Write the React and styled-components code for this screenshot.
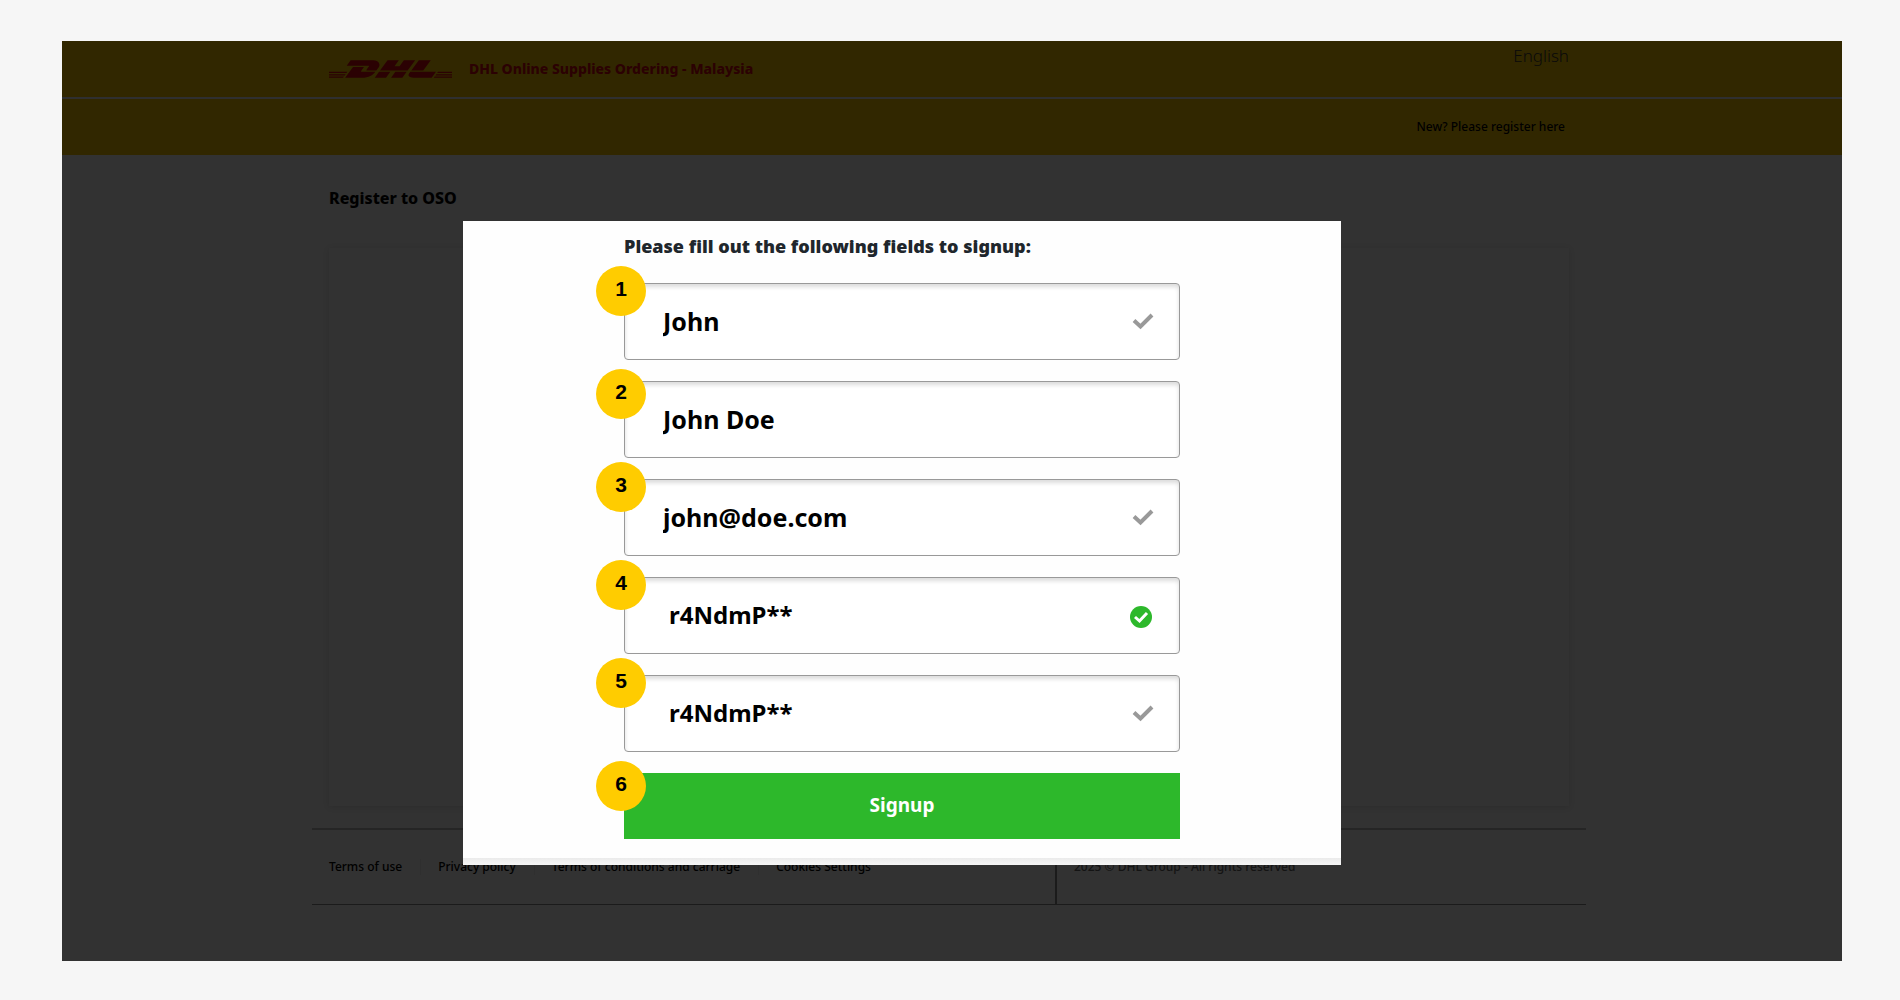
import React from "react"
import styled, { createGlobalStyle } from "styled-components"
import { SiDhl } from "react-icons/si"

const GlobalStyle = createGlobalStyle`
  * {
    box-sizing: border-box;
  }

  body {
    margin: 0;
    background: #f6f6f6;
    font-family: "Noto Sans", "Open Sans", sans-serif;
  }
`

const Page = styled.div`
  padding: 41px 58px 39px 62px;
`

const Stage = styled.div`
  position: relative;
  display: flex;
  flex-direction: column;
  min-height: calc(100vh - 80px);
  background: #f7f7f7;
`

const Bar = styled.div`
  height: 56px;
  padding-right: 6px;
  background: #f5c400;
`

const Header = styled.header`
  display: grid;
  gap: 2px;
  background: #e8ecf0;
`

const Container = styled.div`
  display: flex;
  justify-content: ${({ $end }) => ($end ? "flex-end" : "space-between")};
  align-items: ${({ $top }) => ($top ? "flex-start" : "center")};
  max-width: 1274px;
  height: 100%;
  margin: 0 auto;
  padding: 0 17px;
`

const Brand = styled.a`
  display: flex;
  align-items: center;
  gap: 17px;
  padding-top: 18px;
  color: #d40511;
  font-size: 14px;
  line-height: 20px;
  font-weight: 800;
  text-decoration: none;

  svg {
    width: 123px;
    height: 18px;
  }
`

const Language = styled.a`
  padding-top: 3px;
  color: #333;
  font-size: 17px;
  line-height: 24px;
  font-weight: 300;
  text-decoration: none;
`

const Register = styled.a`
  padding: 0 4px 2px 0;
  color: #000;
  font-size: 12px;
  font-weight: 500;
  text-decoration: none;
`

const Main = styled.main`
  flex: 1;
  width: 100%;
  max-width: 1280px;
  display: flex;
  flex-direction: column;
  margin: 0 auto;
  padding: 31px 23px 22px 17px;

  h1 {
    margin: 0 0 38px;
    font-size: 16px;
    line-height: 24px;
    font-weight: 800;
  }
`

const Card = styled.div`
  flex: 1;
  background: #fafafa;
  box-shadow: 0 1px 6px rgba(0, 0, 0, 0.12);
`

const FooterWrap = styled.div`
  padding: 0 6px 56px 0;
`

const Footer = styled.footer`
  display: flex;
  max-width: 1274px;
  height: 77px;
  margin: 0 auto;
  border-top: 2px solid #bbb;
  border-bottom: 1px solid #888;
  font-size: 12px;
  line-height: 16px;
  font-weight: 500;
`

const FooterLinks = styled.nav`
  flex: 0 0 745px;
  display: flex;
  align-items: flex-start;
  padding: 29px 0 0 17px;
  border-right: 2px solid #888;

  a {
    color: #000;
    text-decoration: none;
    white-space: nowrap;
  }

  a + a {
    margin-left: 18px;
    padding-left: 17px;
    border-left: 1px solid #e8e8e8;
  }
`

const Copyright = styled.p`
  margin: 0;
  padding: 29px 0 0 17px;
  color: #666;
`

const Overlay = styled.div`
  position: absolute;
  inset: 0;
  display: flex;
  justify-content: center;
  align-items: flex-start;
  padding: 180px 100px 0 0;
  background: rgba(0, 0, 0, 0.8);
`

const Modal = styled.form`
  width: 878px;
  background: #fefefe;
  padding: 11px 161px 0;

  h2 {
    margin: 0 0 23px;
    color: #20262c;
    font-size: 18px;
    line-height: 28px;
    font-weight: 900;
    white-space: nowrap;
  }
`

const Fields = styled.div`
  display: grid;
  gap: 21px;
`

const Field = styled.div`
  position: relative;

  svg {
    position: absolute;
    top: 27px;
    right: 26px;
  }
`

const Badge = styled.label`
  position: absolute;
  top: ${({ $low }) => ($low ? "-12px" : "-17px")};
  left: -28px;
  width: 50px;
  height: 50px;
  border-radius: 50%;
  background: #ffcc00;
  color: #000;
  font-family: "Liberation Sans", Arial, sans-serif;
  font-size: 21px;
  line-height: 46px;
  font-weight: 700;
  text-align: center;
`

const Input = styled.input`
  display: block;
  width: 100%;
  height: 77px;
  padding: 0 60px 2px ${({ $secret }) => ($secret ? "44px" : "38px")};
  border: 1px solid #999;
  border-radius: 4px;
  background: #fff;
  box-shadow: inset 0 3px 4px rgba(0, 0, 0, 0.14);
  color: #000;
  font-family: inherit;
  font-size: ${({ $secret }) => ($secret ? "24px" : "25px")};
  font-weight: 700;
`

const Submit = styled.button`
  display: block;
  width: 100%;
  height: 66px;
  padding: 0 0 2px;
  border: 0;
  background: #2db82b;
  color: #fff;
  font-family: inherit;
  font-size: 19px;
  font-weight: 700;
`

const ModalEdge = styled.div`
  height: 7px;
  margin: 19px -161px 0;
  background: linear-gradient(#ebebeb, #f6f6f6);
`

const Check = () => (
  <svg width="22" height="22" viewBox="0 0 22 22" fill="none" stroke="#999" strokeWidth="4">
    <path d="M2 10.5 L8.5 16.5 L20 5" />
  </svg>
)

const CheckCircle = () => (
  <svg width="24" height="24" viewBox="0 0 24 24" fill="none">
    <circle cx="11" cy="13" r="11" fill="#2db82b" />
    <path d="M5 13 L9.5 17 L17 9" stroke="#fff" strokeWidth="3" />
  </svg>
)

const fields = [
  { id: "first", value: "John", icon: <Check /> },
  { id: "full", value: "John Doe", low: true },
  { id: "email", value: "john@doe.com", icon: <Check /> },
  { id: "password", value: "r4NdmP**", icon: <CheckCircle />, secret: true },
  { id: "repeat", value: "r4NdmP**", icon: <Check />, secret: true },
]

const links = ["Terms of use", "Privacy policy", "Terms of conditions and carriage", "Cookies Settings"]

export default () => (
  <Page>
    <GlobalStyle />
    <Stage>
      <Header>
        <Bar>
          <Container $top>
            <Brand href="#">
              <SiDhl viewBox="0 10.24 24 3.52" preserveAspectRatio="none" />
              DHL Online Supplies Ordering - Malaysia
            </Brand>
            <Language href="#">English</Language>
          </Container>
        </Bar>
        <Bar>
          <Container $end>
            <Register href="#">New? Please register here</Register>
          </Container>
        </Bar>
      </Header>
      <Main>
        <h1>Register to OSO</h1>
        <Card />
      </Main>
      <FooterWrap>
        <Footer>
          <FooterLinks>
            {links.map((link) => (
              <a href="#" key={link}>{link}</a>
            ))}
          </FooterLinks>
          <Copyright>2025 © DHL Group - All rights reserved</Copyright>
        </Footer>
      </FooterWrap>
      <Overlay>
        <Modal>
          <h2>Please fill out the following fields to signup:</h2>
          <Fields>
            {fields.map(({ id, value, icon, low, secret }, index) => (
              <Field key={id}>
                <Input id={id} type="text" defaultValue={value} $secret={secret} />
                <Badge htmlFor={id} $low={low}>{index + 1}</Badge>
                {icon}
              </Field>
            ))}
            <Field>
              <Submit type="button">Signup</Submit>
              <Badge as="span" $low>6</Badge>
            </Field>
          </Fields>
          <ModalEdge />
        </Modal>
      </Overlay>
    </Stage>
  </Page>
)
